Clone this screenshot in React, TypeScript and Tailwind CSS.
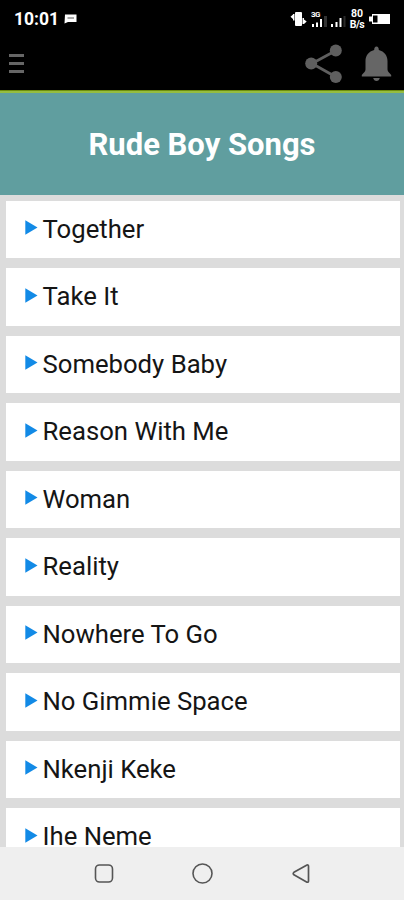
const songs = [
    "Together",
    "Take It",
    "Somebody Baby",
    "Reason With Me",
    "Woman",
    "Reality",
    "Nowhere To Go",
    "No Gimmie Space",
    "Nkenji Keke",
    "Ihe Neme",
];

function StatusBar() {
    return (
        <div className="flex h-[37px] shrink-0 items-center justify-between pl-[14px] pr-[13px] text-white">
            <div className="flex items-center gap-[5px]">
                <span className="pt-[2px] text-[17.5px] font-bold leading-none">10:01</span>
                <svg width="13" height="10" viewBox="0 0 13 10" fill="currentColor">
                    <path d="M1 .5h11.5v7.5H4L.5 9.5z" />
                    <path d="M3.5 4h6.5" stroke="#555" strokeWidth="1" />
                </svg>
            </div>
            <div className="flex items-center">
                {/* vibrate */}
                <svg width="18" height="16" viewBox="0 0 18 16" className="mr-[3px]" fill="currentColor">
                    <rect x="5" y="1" width="7" height="14" rx="1" />
                    <path d="M4.5 3v6.5H3V8L.5 5.7L3 3.5V3zM12.500 7H14v1.500l2.700 2L14 13h-1.500z" />
                </svg>
                <div className="flex w-[17px] flex-col">
                    <span className="text-[8px] font-bold leading-[7px] tracking-[-0.6px]">3G</span>
                    <svg width="17" height="11" viewBox="0 0 17 11" className="-mt-[2px]" fill="currentColor">
                        <path d="M1 8h2v3H1zM5 6.5h2V11H5zM9 3h2v8H9z" />
                        <path d="M13 0h3v11h-3z" fill="#333" />
                    </svg>
                </div>
                <svg width="17" height="14" viewBox="0 0 17 14" className="mb-[-2px] ml-[2px]" fill="currentColor">
                    <path d="M1 11h2v3H1zM5.5 9h2v5h-2zM9.5 5h2v9h-2z" />
                    <path d="M13.5 3h2v11h-2z" fill="#2a2a2a" />
                </svg>
                <div className="ml-[2px] mr-[3px] flex w-[16px] flex-col items-center pt-[2px] text-[10.5px] font-bold leading-[10.5px]">
                    <span>80</span>
                    <span className="tracking-[-0.5px]">B/s</span>
                </div>
                <svg width="23" height="12" viewBox="0 0 23 12" fill="none">
                    <path d="M4 1h18v10H4V8.5H1v-5h3z" fill="#fff" />
                    <path d="M5 2.5h4.5v7H5z" fill="#000" />
                </svg>
            </div>
        </div>
    );
}

function AppBar() {
    return (
        <div className="flex h-[53px] shrink-0 items-center justify-between pl-[9px] pr-[12px]">
            <div className="flex flex-col gap-[5px]">
                <div className="h-[3px] w-[15px] bg-[#666]" />
                <div className="h-[3px] w-[15px] bg-[#666]" />
                <div className="h-[3px] w-[15px] bg-[#666]" />
            </div>
            <div className="flex items-center gap-[18px]">
                <svg width="38" height="40" viewBox="0 0 38 40" fill="#5f5f5f">
                    <path d="M31 6.5L7 19.5L31 33" fill="none" stroke="#5f5f5f" strokeWidth="2.8" />
                    <circle cx="6.2" cy="19.5" r="6" />
                    <circle cx="30.8" cy="6.500" r="6" />
                    <circle cx="30.8" cy="33" r="6" />
                </svg>
                <svg width="31" height="36" viewBox="0 0 30 36" fill="#666">
                    <path d="M15 .5c1.5 0 2.3 1.3 2.3 3.5 5.5 1.5 8.7 5.5 8.7 11v8.5c0 2 2 3.5 3.7 5.5v1.5H.3V29C2 27 4 25.5 4 23.5V15c0-5.5 3.2-9.5 8.7-11C12.7 1.8 13.5.5 15 .5z" />
                    <path d="M11.7 32h6.6c-.5 2-1.600 3-3.300 3s-2.800-1-3.300-3z" />
                </svg>
            </div>
        </div>
    );
}

function SongRow({ title }: { title: string }) {
    return (
        <li className="flex h-[57.5px] shrink-0 items-center bg-white pl-[19px]">
            <svg width="13" height="15" viewBox="0 0 13 15" className="mb-[3px] mr-[4.5px]" fill="#128ae6">
                <path d="M.3 .3L12.5 7.5L.3 14.7z" />
            </svg>
            <span className="mb-[1px] whitespace-nowrap text-[25.7px] leading-[30px] text-[#151515]">{title}</span>
        </li>
    );
}

function NavBar() {
    return (
        <div className="flex h-[53px] shrink-0 items-center justify-between bg-[#efefef] pl-[94px] pr-[93px]">
            <svg width="20" height="20" viewBox="0 0 20 20" fill="none" stroke="#555" strokeWidth="1.6">
                <rect x="1.5" y="1" width="17" height="17" rx="4" />
            </svg>
            <svg width="22" height="22" viewBox="0 0 22 22" fill="none" stroke="#555" strokeWidth="1.6">
                <circle cx="10.5" cy="10.5" r="9.5" />
            </svg>
            <svg width="20" height="20" viewBox="0 0 20 20" fill="none" stroke="#555" strokeWidth="1.7" strokeLinejoin="round">
                <path d="M16 1L2.9 8.3Q1.500 9.500 2.900 10.800L16 18.200Q17.500 18.500 17.500 17V2.200Q17.500 .7 16 1z" />
            </svg>
        </div>
    );
}

export default function App() {
    return (
        <div className="flex h-[900px] w-[404px] flex-col overflow-hidden bg-black font-['Roboto',sans-serif]">
            <StatusBar />
            <AppBar />
            <div className="h-[3px] shrink-0 border-t border-[#6f8f0c] bg-[#95bd40]" />
            <h1 className="flex h-[102px] shrink-0 items-center justify-center bg-[#609e9f] pt-[2px] text-[31px] font-bold text-white">
                Rude Boy Songs
            </h1>
            <ul className="flex min-h-0 flex-1 flex-col gap-[10px] overflow-hidden bg-[#dcdcdc] pl-[6px] pr-[4.5px] pt-[5.6px]">
                {songs.map((song) => (
                    <SongRow key={song} title={song} />
                ))}
            </ul>
            <NavBar />
        </div>
    );
}
